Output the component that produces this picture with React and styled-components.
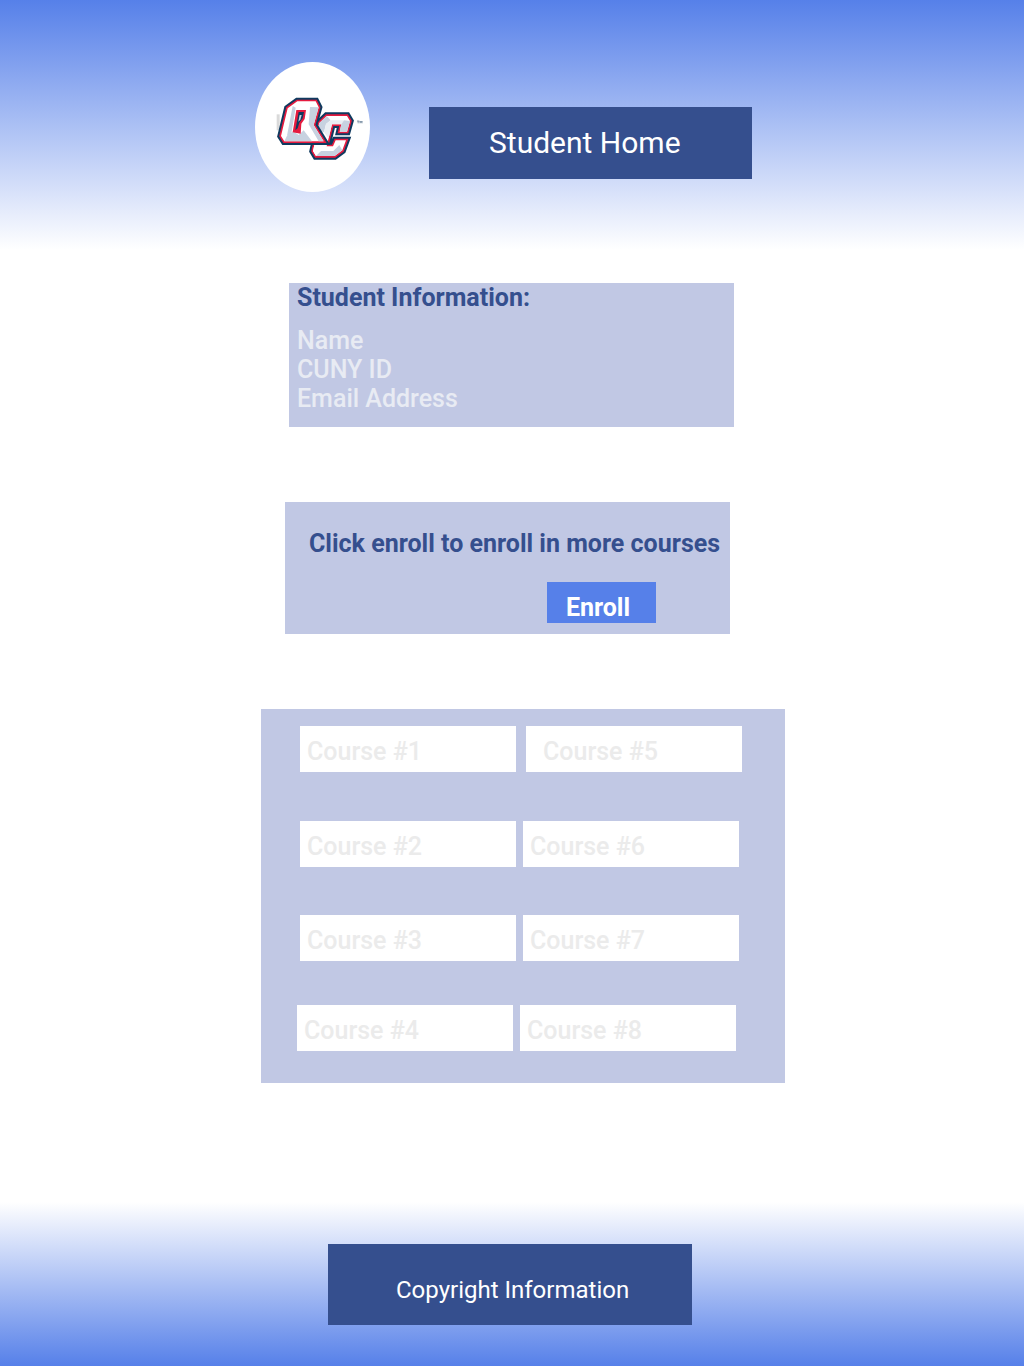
import React from 'react';
import styled, { createGlobalStyle } from 'styled-components';

const color = {
  sky: '#5680e9',
  navy: '#354f8e',
  panel: '#c1c8e4',
  faint: '#e8ebf3',
  slot: '#ebebeb',
};

const GlobalStyle = createGlobalStyle`
  *, *::before, *::after { box-sizing: border-box; }
  body {
    margin: 0;
    background: #fff;
    font-family: Roboto, "Liberation Sans", sans-serif;
    font-size: 25px;
    line-height: 29px;
  }
  h1, h2, p, ul { margin: 0; padding: 0; font: inherit; list-style: none; }
`;

const Page = styled.div`
  min-height: 100vh;
  display: flex;
  flex-direction: column;
`;

const Band = styled.div`
  display: flex;
  justify-content: center;
`;

const HeaderBand = styled(Band).attrs({ as: 'header' })`
  min-height: 250px;
  padding: 62px 0 58px;
  background: linear-gradient(${color.sky}, #fff);
`;

const FooterBand = styled(Band).attrs({ as: 'footer' })`
  margin-top: auto;
  padding: 42px 0 41px;
  background: linear-gradient(#fff, ${color.sky});
`;

const Column = styled.div`
  width: 100%;
  max-width: 546px;
  padding-left: 16px;
`;

const Brand = styled(Column)`
  display: flex;
  align-items: flex-start;
  gap: 59px;
`;

const Logo = styled.svg`
  flex: none;
  width: 115px;
  height: 130px;
`;

const Title = styled.h1`
  width: 323px;
  margin-top: 45px;
  padding: 18px 60px;
  background: ${color.navy};
  color: #fff;
  font-size: 30px;
  line-height: 36px;
  white-space: nowrap;
`;

const Main = styled(Column).attrs({ as: 'main' })`
  margin: 0 auto;
  padding-top: 33px;
  padding-bottom: 32px;
  display: flex;
  flex-direction: column;
  gap: 75px;
`;

const Panel = styled.section`
  width: ${(p) => p.$width}px;
  max-width: 100%;
  margin-left: ${(p) => p.$inset}px;
  padding: ${(p) => p.$padding};
  background: ${color.panel};
`;

const Heading = styled.h2`
  color: ${color.navy};
  font-weight: 700;
  white-space: nowrap;
`;

const Fields = styled.ul`
  margin-top: 14px;
  color: ${color.faint};
  font-weight: 500;
`;

const EnrollButton = styled.button`
  display: block;
  width: 109px;
  height: 41px;
  margin: 24px 0 0 238px;
  padding: 11px 7px 1px 0;
  border: 0;
  background: ${color.sky};
  color: #fff;
  font: inherit;
  font-weight: 700;
  cursor: pointer;
`;

const CourseRow = styled.ul`
  display: flex;
  gap: ${(p) => p.$gap}px;
  margin-top: ${(p) => p.$space}px;
  padding-left: ${(p) => p.$inset}px;
`;

const Course = styled.li`
  width: 216px;
  padding: 11px 0 6px ${(p) => (p.$indented ? 17 : 7)}px;
  background: #fff;
  color: ${color.slot};
  font-weight: 500;
`;

const Copyright = styled.p`
  width: 364px;
  margin-right: 4px;
  padding: 32px 0 21px 68px;
  background: ${color.navy};
  color: #fff;
  font-size: 24px;
  line-height: 28px;
  white-space: nowrap;
`;

const rows = [
  { names: ['Course #1', 'Course #5'], inset: 39, gap: 10, space: 0 },
  { names: ['Course #2', 'Course #6'], inset: 39, gap: 7, space: 49 },
  { names: ['Course #3', 'Course #7'], inset: 39, gap: 7, space: 48 },
  { names: ['Course #4', 'Course #8'], inset: 36, gap: 7, space: 44 },
];

const C_SHAPE =
  'M230 183 H291 L300 198 L291 230 H269 L274 208 H246 L230 274 H249 L257 256 H288 L277 286 L254 303 H198 L189 288 L208 204 Z';
const Q_SHAPE =
  'M142 139 H197 L206 157 L191 210 L221 259 H103 L93 243 L113 160 Z';

function CollegeLogo() {
  return (
    <Logo viewBox="15 21 345 390" role="img" aria-label="QC">
      <ellipse cx="187.5" cy="216" rx="172.5" ry="195" fill="#fff" />
      <path d="M80 178 H89 V226 H80 Z" fill="#dadada" />
      <path d={C_SHAPE} fill="#0f3a5f" stroke="#0f3a5f" strokeWidth="22" />
      <path d={C_SHAPE} fill="#fff" stroke="#e51b3f" strokeWidth="10" paintOrder="stroke" />
      <path d="M208 204 L228 200 L213 282 L198 303 L189 288 Z" fill="#fff" />
      <path d="M208 204 L230 183 L242 196 L228 207 L222 232 L202 226 Z" fill="#c7d2e0" />
      <path d="M242 196 H282 L274 208 H246 L236 250 L222 232 L228 207 Z" fill="#e9eef3" />
      <path d="M282 196 L300 198 L291 230 H269 L274 208 Z" fill="#c7d2e0" />
      <path d="M213 288 H250 L268 270 L277 286 L254 303 H198 Z" fill="#c7d2e0" />
      <path d={Q_SHAPE} fill="#0f3a5f" stroke="#0f3a5f" strokeWidth="22" />
      <path d={Q_SHAPE} fill="#fff" stroke="#e51b3f" strokeWidth="10" paintOrder="stroke" />
      <path d="M180 156 L206 157 L191 210 L221 259 H206 L176 208 Z" fill="#c7d2e0" />
      <path d="M128 153 L137 158 L124 236 L111 242 Z" fill="#c7d2e0" />
      <path d="M111 242 L130 229 L146 240 L161 226 L186 259 H103 Z" fill="#c7d2e0" />
      <path d="M139 165 H168 L164 192 L154 206 L152 236 L128 232 Z" fill="#e51b3f" />
      <path d="M146 171 H162 L158 190 L148 203 L143 220 L136 226 Z" fill="#0f3a5f" />
      <path d="M149 180 H155 L151 194 L145 200 Z" fill="#c7d2e0" />
      <path d="M321 198 H328 M324.500 198 V205 M330 205 V198 L333 203 L336 198 V205" fill="none" stroke="#526d88" strokeWidth="2" />
    </Logo>
  );
}

export default function App() {
  return (
    <Page>
      <GlobalStyle />
      <HeaderBand>
        <Brand>
          <CollegeLogo />
          <Title>Student Home</Title>
        </Brand>
      </HeaderBand>
      <Main>
        <Panel $width={445} $inset={34} $padding="0 8px 14px">
          <Heading>Student Information:</Heading>
          <Fields>
            <li>Name</li>
            <li>CUNY ID</li>
            <li>Email Address</li>
          </Fields>
        </Panel>
        <Panel $width={445} $inset={30} $padding="27px 0 11px 24px">
          <Heading>Click enroll to enroll in more courses</Heading>
          <EnrollButton type="button">Enroll</EnrollButton>
        </Panel>
        <Panel $width={524} $inset={6} $padding="17px 0 32px">
          {rows.map((row, i) => (
            <CourseRow key={row.names[0]} $inset={row.inset} $gap={row.gap} $space={row.space}>
              {row.names.map((name, j) => (
                <Course key={name} $indented={i === 0 && j === 1}>{name}</Course>
              ))}
            </CourseRow>
          ))}
        </Panel>
      </Main>
      <FooterBand>
        <Copyright>Copyright Information</Copyright>
      </FooterBand>
    </Page>
  );
}
